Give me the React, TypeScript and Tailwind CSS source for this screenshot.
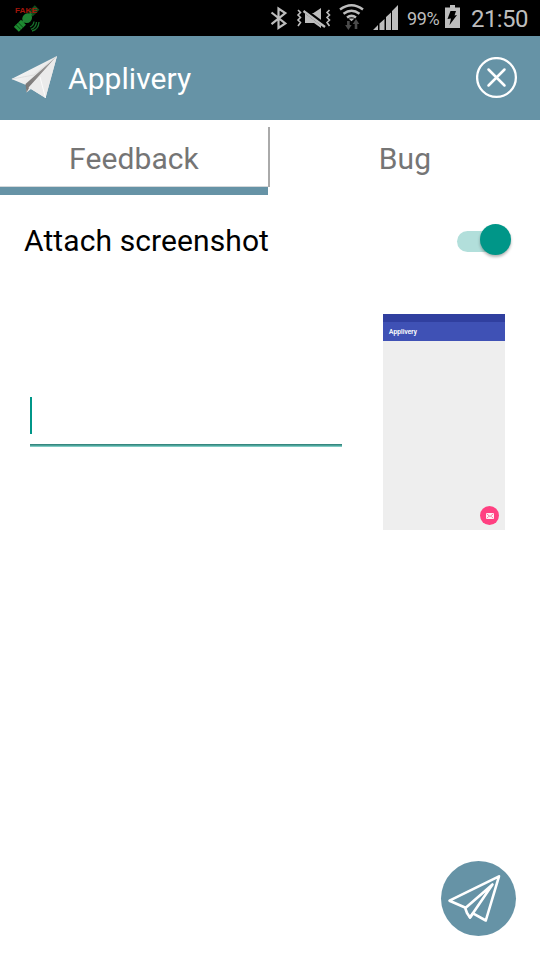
function FakeGpsIcon() {
  return (
    <svg className="ml-[14px] h-9 w-[28px]" viewBox="14 0 28 36">
      <g transform="rotate(-45 27 18)">
        <rect x="11.500" y="15" width="10" height="7" fill="#1d8a30" />
        <rect x="32" y="14.500" width="9.500" height="6.500" fill="#124d1d" />
        <path d="M14.500 15v7M17.500 15v7M35 14.500v6.500M38 14.500v6.500" stroke="#063b10" strokeWidth=".8" />
        <path d="M21 18h12" stroke="#1f8132" strokeWidth="2.500" />
        <ellipse cx="27" cy="18.200" rx="5.200" ry="4.600" fill="#1f8132" />
      </g>
      <path d="M30 27q3.500-1.500 4-5.500M31 29.300q5-1.700 5.500-7.300M32 31q6.500-1.500 7-9" fill="none" stroke="#17702a" strokeWidth="1.300" />
      <text x="15" y="13" fill="#a3160b" fontSize="7.500" fontWeight="700" textLength="22" lengthAdjust="spacingAndGlyphs" className="font-['Liberation_Sans',sans-serif]">FAKE</text>
    </svg>
  );
}

function StatusIcons() {
  return (
    <div className="flex items-center">
      <svg className="h-9 w-[18px]" viewBox="270 0 18 36" fill="none" stroke="#bdbdbd" strokeWidth="2.200">
        <path d="M271.500 12.500L285.300 23.500L278.500 28V8.500L285.300 13L271.500 24.200" />
      </svg>
      <svg className="ml-[8px] h-9 w-[36px]" viewBox="296 0 36 36">
        <path d="M305 13v10h9l7 5V8l-7.500 5z" fill="#bdbdbd" />
        <path d="M303.500 9.500l22 16.500" stroke="#000" strokeWidth="4.500" />
        <path d="M303.500 11l21.500 16" stroke="#bdbdbd" strokeWidth="2.300" />
        <path d="M298 10l2.500 2.500-2.500 2.500 2.500 2.500-2.500 2.500 2.500 2.500-2.500 3.500M329.500 10l-2.500 2.500 2.500 2.500-2.500 2.500 2.500 2.500-2.500 2.500 2.500 3.500" fill="none" stroke="#bdbdbd" strokeWidth="1.600" />
      </svg>
      <svg className="ml-[7px] h-9 w-[26px]" viewBox="339 0 26 36">
        <g fill="none" stroke="#bdbdbd" strokeWidth="2.500">
          <path d="M340 9.500q11.500-8.500 23 0M343.500 13.700q8-5.800 16 0M347 17.500q4.500-3.200 9 0" />
        </g>
        <path d="M348.500 18.500h6l-3 2.800z" fill="#bdbdbd" />
        <path d="M347 21h2.700v4h2l-3.300 5-3.300-5h2zM354.700 29h2.600v-5h2l-3.300-5-3.300 5h2z" fill="#4b4b4b" />
      </svg>
      <svg className="ml-[8px] h-9 w-[26px]" viewBox="373 0 26 36" fill="#bdbdbd">
        <path d="M373 30l5-5V30zM379.500 30v-6.500l5-4.500V30zM386 30V17l5-4.500V30zM392 30V11l6-6V30z" />
      </svg>
      <span className="ml-[8px] w-[34px] whitespace-nowrap pt-[1px] text-[18px] tracking-[-0.400px]">99%</span>
      <svg className="ml-[3px] h-9 w-[17px]" viewBox="444 0 17 36">
        <path d="M450 5h5v2.500h5V28h-15V7.500h5z" fill="#bdbdbd" />
        <path d="M450.500 11h5.500l-1.500 4.500 2.500-.5-7.500 10 1.500-6.500-3.500.5z" fill="#000" />
      </svg>
    </div>
  );
}

function PaperPlane() {
  return (
    <svg className="ml-[10px] h-[46px] w-[49px]" viewBox="10 56 49 46">
      <defs>
        <linearGradient id="wing" x1="0" y1="0" x2="1" y2="1">
          <stop offset="0" stopColor="#fff" />
          <stop offset="1" stopColor="#d7d7d7" />
        </linearGradient>
        <linearGradient id="fold" x1="1" y1="0" x2="0" y2="1">
          <stop offset="0" stopColor="#a5a3a2" />
          <stop offset="1" stopColor="#777473" />
        </linearGradient>
      </defs>
      <path d="M57 57L11.500 80L26 86L26.500 93.500L31 90L45.500 99Z" fill="url(#wing)" />
      <path d="M57 57L25.500 85L26.500 93.500L29 89Z" fill="url(#fold)" />
      <path d="M57 57L28.500 88.500L45.500 99Z" fill="#ebebeb" />
      <path d="M12 80l22-4 22-18" fill="none" stroke="#dadada" strokeWidth=".8" />
      <path d="M40 78l5.500 21" stroke="#fff" strokeWidth=".8" />
    </svg>
  );
}

function Preview() {
  return (
    <div className="mr-[35px] flex h-[216px] w-[122px] shrink-0 flex-col bg-[#eeeeee]">
      <div className="h-2 bg-[#303f9f]" />
      <div className="flex h-[19px] items-center bg-[#3f51b5] pt-[2px] pl-[6px] text-[6.500px] tracking-[0.150px] text-white [-webkit-text-stroke:0.200px_white]">Applivery</div>
      <div className="mr-[6px] mb-[5px] mt-auto ml-auto flex h-[19px] w-[19px] items-center justify-center rounded-full bg-[#ff4081]">
        <svg width="8" height="6" viewBox="0 0 8 6">
          <rect width="8" height="6" rx=".5" fill="#fff0f5" />
          <path d="M.7.8L4 3.500L7.300.8M.8 5.300l2-2M7.200 5.300l-2-2" fill="none" stroke="#e9648d" strokeWidth=".8" />
        </svg>
      </div>
    </div>
  );
}

export default function App() {
  return (
    <div className="flex h-[960px] w-[540px] flex-col overflow-hidden bg-white font-[Roboto,sans-serif]">
      <div className="flex h-9 shrink-0 items-center justify-between bg-black text-[#bdbdbd]">
        <FakeGpsIcon />
        <div className="flex items-center">
          <StatusIcons />
          <span className="ml-[10px] w-[69px] whitespace-nowrap pt-[1px] text-[24px] leading-9 tracking-[-0.600px]">21:50</span>
        </div>
      </div>

      <header className="flex h-[84px] shrink-0 items-center bg-[#6693a6] text-white">
        <PaperPlane />
        <h1 className="ml-[9px] pt-[2px] text-[30px] leading-9 tracking-[0.060px]">Applivery</h1>
        <button className="mr-[22px] ml-auto h-[42px] w-[42px]" aria-label="Close">
          <svg viewBox="0 0 42 42" fill="none" stroke="white">
            <circle cx="20.500" cy="20.500" r="19.400" strokeWidth="2.300" />
            <path d="M12.500 12.500l16 16M28.500 12.500l-16 16" strokeWidth="2.500" strokeLinecap="round" />
          </svg>
        </button>
      </header>

      <nav className="flex h-[75px] shrink-0 text-[30px] leading-9 tracking-[0.100px] text-[#757575]">
        <div className="flex w-[268px] flex-col">
          <button className="h-[67px] border-b border-[#d4d8da] pt-[11px]">Feedback</button>
          <div className="h-2 bg-[#6693a6]" />
        </div>
        <div className="mt-[7px] h-[60px] w-[2px] bg-[#aaaaaa]" />
        <button className="h-[67px] flex-1 pt-[11px]">Bug</button>
      </nav>

      <main className="flex flex-1 flex-col">
        <div className="mt-[26px] flex h-10 items-center justify-between pr-[29px] pl-6">
          <span className="text-[30px] leading-9 tracking-[0.100px]">Attach screenshot</span>
          <div className="mt-px flex h-[21px] w-[54px] items-center justify-end rounded-full bg-[#b2dfdb]">
            <div className="-mt-[4px] h-[31px] w-[31px] rounded-full bg-[#009688] shadow-[0_2px_3px_rgba(0,0,0,0.300)]" />
          </div>
        </div>
        <div className="mt-[53px] flex justify-between">
          <div className="ml-[30px] flex w-[312px] flex-col pt-[83px]">
            <div className="h-[37px] w-[2px] bg-[#009688]" />
            <div className="mt-[10px] h-px bg-[#36877f]" />
            <div className="h-px bg-[#4da39a]" />
            <div className="h-px bg-[#80cbc4]" />
          </div>
          <Preview />
        </div>
        <button className="mt-auto mr-6 mb-6 ml-auto h-[75px] w-[75px] rounded-full bg-[#6693a6]" aria-label="Send">
          <svg viewBox="0 0 75 75" fill="none" stroke="white" strokeWidth="2.600" strokeLinecap="round" strokeLinejoin="round">
            <path d="M58 15.300L8.500 39.700L24 46.500L26 52L29 56.500L32 52.300L44.800 59.500Z" />
            <path d="M25 46.500L51.500 23.500L29 56.500" />
          </svg>
        </button>
      </main>
    </div>
  );
}
